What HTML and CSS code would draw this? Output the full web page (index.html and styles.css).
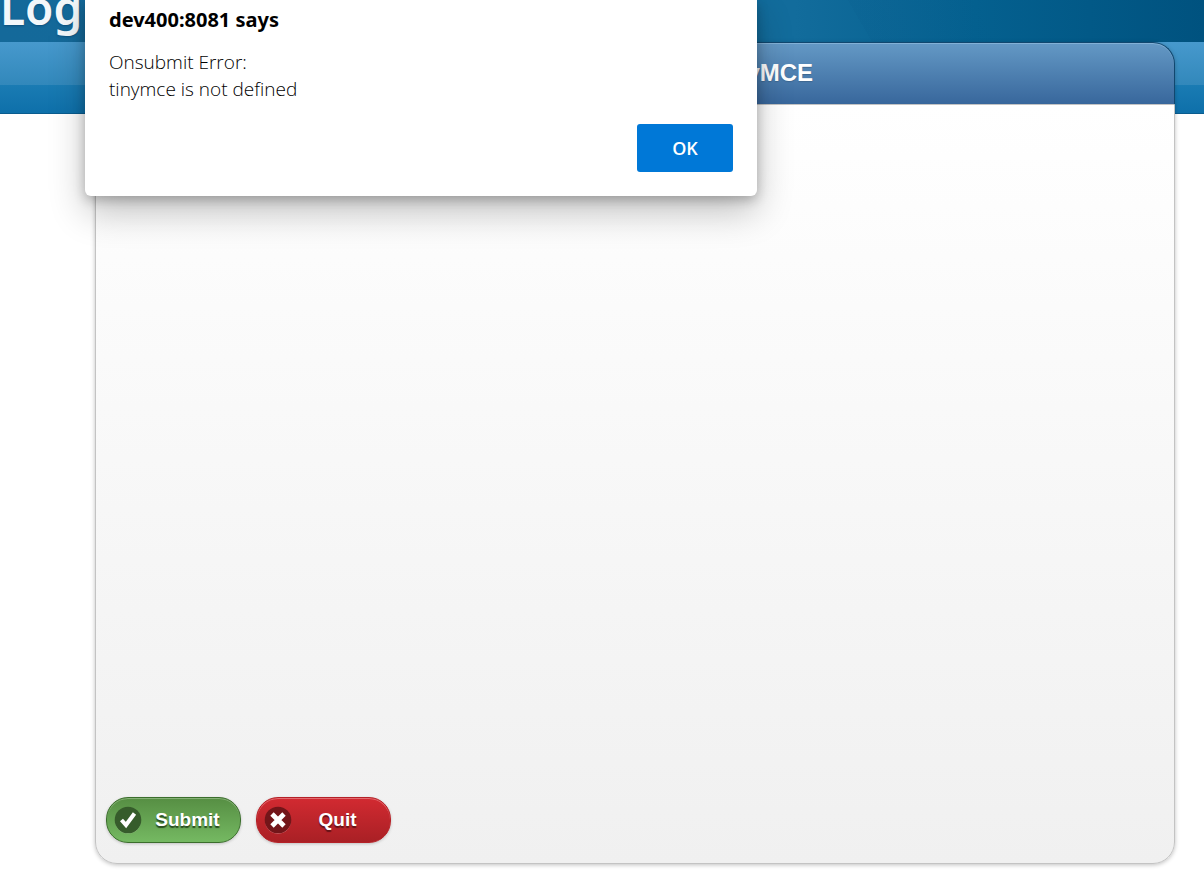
FILE: index.html
```html
<!DOCTYPE html>
<html lang="en">
<head>
<meta charset="UTF-8">
<title>TinyMCE</title>
<meta name="viewport" content="width=device-width, initial-scale=1.0">
<link rel="stylesheet" href="styles.css">
</head>
<body>
<header class="banner"><span class="logo">Log</span></header>
<div class="navbar"></div>

<form class="panel" onsubmit="return false">
    <h1 class="panel-title">TinyMCE</h1>
    <div class="panel-body">
        <div class="buttons">
            <button type="submit" class="btn btn-submit">
                <svg class="icon" viewBox="0 0 28 28" aria-hidden="true">
                    <circle cx="14" cy="14.8" r="13" fill="#9bc98b"/>
                    <circle cx="14" cy="14" r="13.3" fill="#365c2b"/>
                    <path d="M7.5 14l4.500 5L20.500 7.500" fill="none" stroke="#fff" stroke-width="4"/>
                </svg>
                <span class="btn-label">Submit</span>
            </button>
            <button type="button" class="btn btn-quit">
                <svg class="icon" viewBox="0 0 28 28" aria-hidden="true">
                    <circle cx="14" cy="14.8" r="13" fill="#e07b7f"/>
                    <circle cx="14" cy="14" r="13.3" fill="#731519"/>
                    <path d="M8 8l12 12M20 8L8 20" fill="none" stroke="#fff" stroke-width="4.800"/>
                </svg>
                <span class="btn-label">Quit</span>
            </button>
        </div>
    </div>
</form>

<div class="dialog" role="alertdialog" aria-labelledby="dlgTitle" aria-describedby="dlgText">
    <h2 class="dialog-title" id="dlgTitle">dev400:8081 says</h2>
    <p class="dialog-text" id="dlgText">Onsubmit Error:<br>tinymce is not defined</p>
    <div class="dialog-actions">
        <button type="button" class="ok">OK</button>
    </div>
</div>
</body>
</html>
```
FILE: styles.css
```css
*{box-sizing:border-box}
body{display:flex;flex-direction:column;min-height:100vh;margin:0;background:#fff;font-family:"Liberation Sans",Arial,sans-serif}

.banner{
    display:flex;align-items:flex-end;height:42px;overflow:hidden;
    background:
        linear-gradient(60deg,transparent 71%,rgba(0,70,120,.06) 71%,transparent 82%),
        linear-gradient(90deg,#14699a 0,#126c9c 66%,#04608f 81%,#00527f 100%);
}
.logo{color:#f3f7fa;font:600 46px/70px "Noto Sans",sans-serif;text-shadow:0 1px 2px rgba(0,40,80,.4)}
.navbar{
    height:72px;border-bottom:1px solid #0a5c8e;
    background:linear-gradient(#4799cd 0,#3288bb 60%,#1a7bb3 61%,#0e70aa 100%);
}

.panel{
    display:flex;flex:1;flex-direction:column;
    margin:-72px 29px 12px 95px;border-radius:22px;
    box-shadow:0 1px 4px rgba(0,0,0,.25);
}
.panel-title{
    height:62px;margin:0;padding-left:254px;
    border:1px solid #11476f;border-bottom:0;border-radius:22px 22px 0 0;
    background:linear-gradient(#6499c5,#38679c);
    box-shadow:inset 0 1px 0 #82b1d6;
    color:#fff;font-size:24px;line-height:60px;text-align:center;
    text-shadow:0 1px 1px #3e6790;
}
.panel-body{
    display:flex;flex:1;flex-direction:column;justify-content:flex-end;
    padding:20px 10px;
    border:1px solid #c3c3c3;border-radius:0 0 22px 22px;
    background:linear-gradient(#fff,#f0f0f0);
}
.buttons{display:flex;gap:15px}
.btn{
    display:flex;align-items:center;width:135px;height:46px;padding:0 7px;
    border-radius:22px;color:#fff;cursor:pointer;
    font:bold 19px/24px "Liberation Sans",Arial,sans-serif;
}
.btn-submit{
    border:1px solid #3b6e2c;background:linear-gradient(#568e43,#75b962);
    box-shadow:inset 0 1px 0 #86b176,0 1px 3px rgba(0,0,0,.2);
    text-shadow:0 2px 1px #294c20;
}
.btn-quit{
    border:1px solid #b52127;background:linear-gradient(#d22a31,#a92025);
    box-shadow:inset 0 1px 0 #e36a6f,0 1px 3px rgba(0,0,0,.2);
    text-shadow:0 2px 1px #651317;
}
.icon{flex:none;width:28px;height:28px}
.btn-label{flex:1;text-align:center}

/* browser alert, hangs from the top over the page */
.dialog{
    position:absolute;top:0;left:85px;width:672px;padding:6px 24px 24px;
    border-radius:0 0 6px 6px;background:#fff;color:#000;
    font-family:"Noto Sans",sans-serif;
    box-shadow:0 16px 36px rgba(0,0,0,.24),0 4px 12px rgba(0,0,0,.24);
}
.dialog-title{margin:0;font-size:20px;line-height:28px;font-weight:700}
.dialog-text{margin:15px 0 21px;font-family:"Open Sans","Noto Sans",sans-serif;font-size:19px;line-height:27px;font-weight:350}
.dialog-actions{display:flex;justify-content:flex-end}
.ok{width:96px;height:48px;border:0;border-radius:3px;background:#0078d7;color:#fff;font:600 18px/24px "Open Sans",sans-serif;cursor:pointer}
```
